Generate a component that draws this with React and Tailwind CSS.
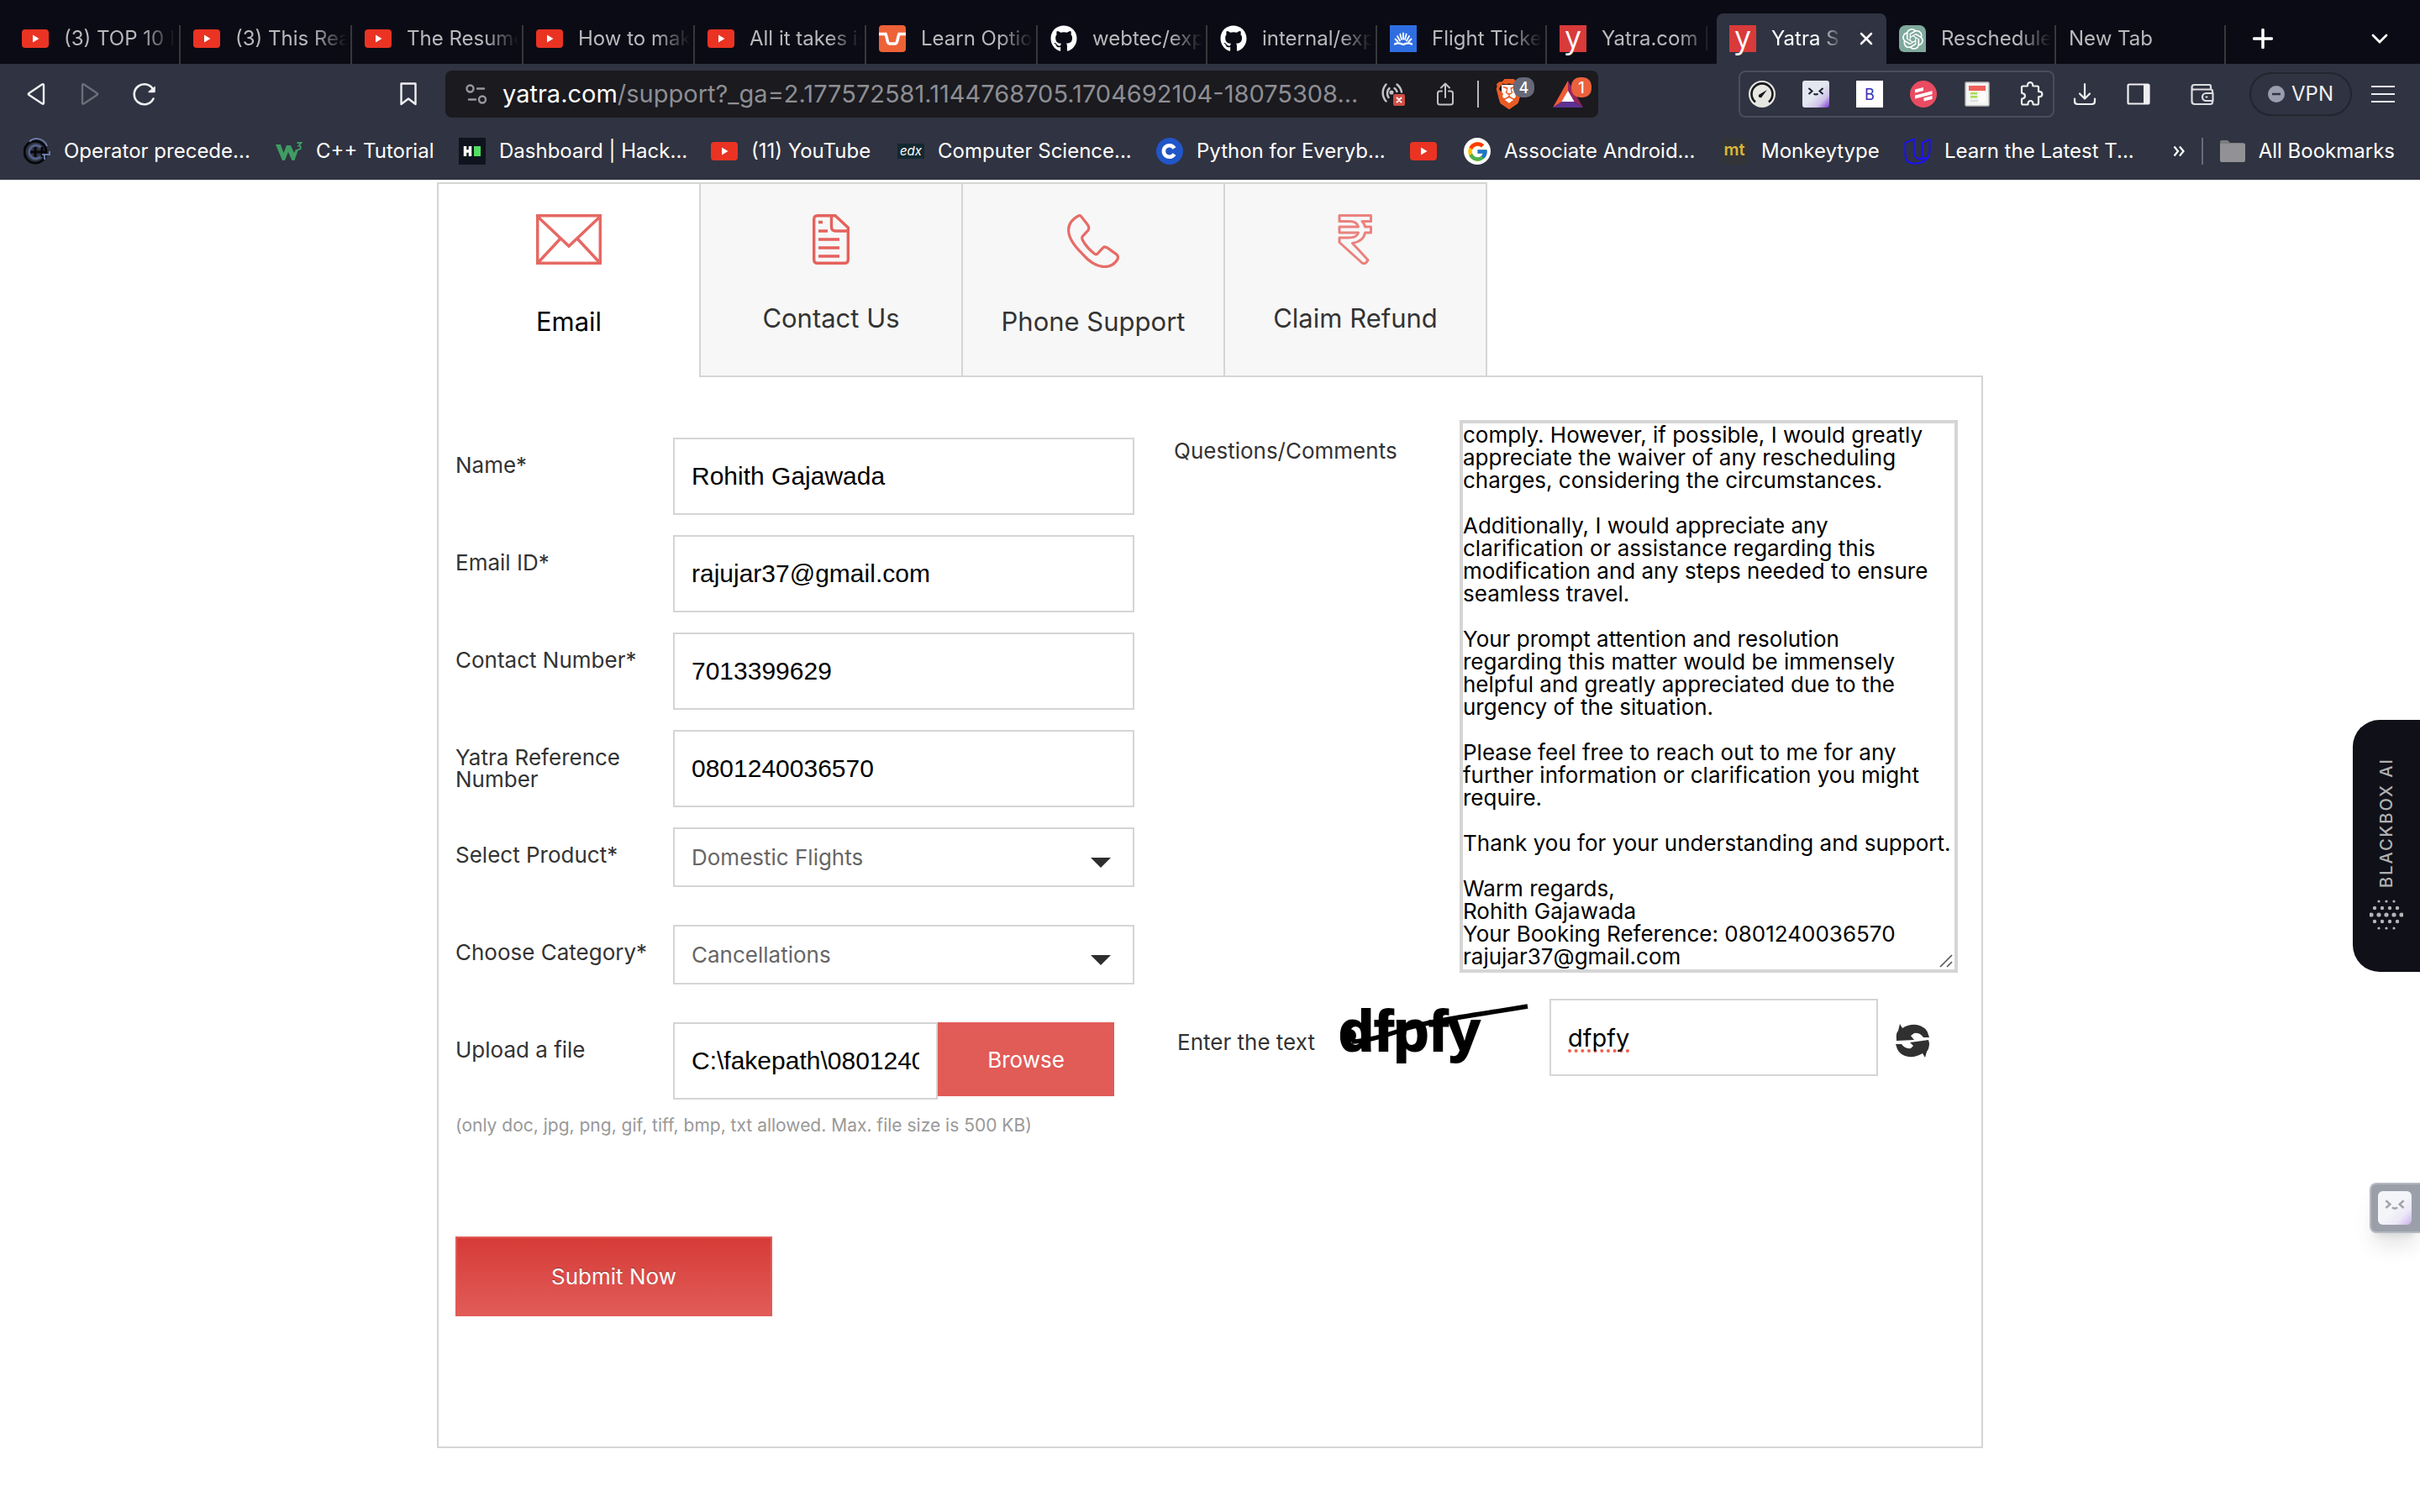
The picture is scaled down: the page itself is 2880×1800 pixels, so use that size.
import React from "react";
import { FaGithub } from "react-icons/fa";
import { FcGoogle } from "react-icons/fc";
import { SiBrave, SiOpenai } from "react-icons/si";

/* ---------- favicons ---------- */

const YouTube = () => (
  <svg viewBox="0 0 32 32" className="size-8">
    <rect x="0" y="5" width="32" height="22" rx="4" fill="#ea3323" />
    <path d="M13 11.5v9l7.500-4.500z" fill="#fff" />
  </svg>
);

const Unstop = () => (
  <svg viewBox="0 0 32 32" className="size-8">
    <rect width="32" height="32" rx="4" fill="#ee6237" />
    <path d="M0 10.500h8c2.500 6 1.500 11.500 4.500 11.500h7c3 0 2-5.500 4.500-11.500h8" fill="none" stroke="#fff" strokeWidth="3.500" />
  </svg>
);

const FlightIcon = () => (
  <svg viewBox="0 0 32 32" className="size-8">
    <rect width="32" height="32" fill="#2e6ee0" />
    <g stroke="#fff" strokeWidth="1.800" strokeLinecap="round" fill="none">
      <path d="M16 9.500v7M12.300 10.500l1.700 6.500M19.700 10.500L18 17M9 13l3 5.500M23 13l-3 5.500M6.500 16.500l3 3M25.500 16.500l-3 3" />
      <path d="M6 22.500c4-2.500 7-1 10 .5 3-1.500 6-3 10-.5" strokeWidth="2.200" />
    </g>
  </svg>
);

const YatraIcon = () => (
  <span className="flex size-8 items-center justify-center bg-[#d93a3a] pb-1 font-['Open_Sans',sans-serif] text-[36px] leading-8 text-white">y</span>
);

const ChatIcon = () => (
  <span className="flex size-8 items-center justify-center rounded-tl-lg rounded-tr-lg rounded-bl-md bg-[#7fa99c] text-white">
    <SiOpenai size={25} />
  </span>
);

const GithubIcon = () => <FaGithub size={32} className="text-white" />;

const CppIcon = () => (
  <svg viewBox="0 0 32 32" className="size-8">
    <circle cx="14" cy="17" r="13" fill="none" stroke="#07080c" strokeWidth="3" />
    <path d="M7 4.500A13 13 0 0 1 28 10" fill="none" stroke="#6a7ba6" strokeWidth="2" />
    <path d="M21 12a8 8 0 1 0 0 10" fill="none" stroke="#536189" strokeWidth="3" />
    <path d="M8 17h20M14 11v12M22 11v12" stroke="#07080c" strokeWidth="3" />
    <path d="M22 20h9v-4M25 20v6" stroke="#6a7ba6" strokeWidth="2" fill="none" />
  </svg>
);

const W3Icon = () => (
  <svg viewBox="0 0 32 32" className="size-8">
    <path d="M0 8h6l3.500 10L13 9h5l4 9 2-4 3 0-4.500 13h-3L15 17l-4 10H8z" fill="#3f9c63" />
    <path d="M25.500 6h5l-3 3.500c3.500 0 3.500 5-1.500 4.500" fill="none" stroke="#3f9c63" strokeWidth="1.800" />
  </svg>
);

const HackIcon = () => (
  <svg viewBox="0 0 32 32" className="size-8">
    <rect width="32" height="32" fill="#0e141e" />
    <path d="M7.500 10v12M13.500 10v12M7.500 16h6" stroke="#fff" strokeWidth="3.500" />
    <rect x="18" y="10" width="8" height="12" fill="#4fdf5f" />
  </svg>
);

const EdxIcon = () => (
  <span className="flex size-8 items-center justify-center">
    <span className="flex h-[18px] w-8 items-center justify-center bg-[#12292f] text-[15px] text-white italic">edx</span>
  </span>
);

const CourseraIcon = () => (
  <svg viewBox="0 0 32 32" className="size-8">
    <circle cx="16" cy="16" r="16" fill="#2156c9" />
    <path d="M21.500 12.500a6.800 6.800 0 1 0 0 7" fill="none" stroke="#fff" strokeWidth="4.500" />
  </svg>
);

const GoogleIcon = () => (
  <span className="flex size-8 items-center justify-center rounded-full bg-white">
    <FcGoogle size={27} />
  </span>
);

const MtIcon = () => (
  <span className="flex size-8 items-center justify-center rounded-md bg-[#323437] pb-1 text-[20px] leading-none font-semibold text-[#dcb63a]">mt</span>
);

const UdacityIcon = () => (
  <svg viewBox="0 0 34 34" className="size-8" fill="none" stroke="#1b12f5" strokeWidth="2.200" strokeLinejoin="round">
    <path d="M1.500 6.500L12.500 1.500V18q0 7 6.500 9M1.500 6.500V21q0 11.500 11.500 11.500" />
    <path d="M13 32.500C25 32.500 32.500 28 32.500 15V2L23 6.500V21q0 5.500-4 6 5 .5 9-2.500" />
  </svg>
);

/* ---------- extension icons ---------- */

const GaugeIcon = () => (
  <svg viewBox="0 0 32 32" className="size-8">
    <circle cx="16" cy="16" r="16" fill="#e6e7e2" />
    <path d="M8 25.500a12.500 12.500 0 1 1 16 0" fill="none" stroke="#17181a" strokeWidth="2.600" />
    <path d="M22 11l-8.500 5a2.200 2.200 0 1 0 2.500 3z" fill="#17181a" />
  </svg>
);

const FaceIcon = ({ id }) => (
  <svg viewBox="0 0 32 32" className="size-full">
    <defs>
      <linearGradient id={id} x1="0" y1="0" x2="1" y2="1">
        <stop offset="0.500" stopColor="#e3e7f0" />
        <stop offset="0.750" stopColor="#cfc3ea" />
        <stop offset="1" stopColor="#7a35c9" />
      </linearGradient>
    </defs>
    <rect width="32" height="32" rx="3" fill={`url(#${id})`} />
    <path d="M7.500 9l4 3.500-4 3.500M24.500 9l-4 3.500 4 3.500M13.500 15.500q2.500 2 5 0" fill="none" stroke="#191b2a" strokeWidth="2" />
  </svg>
);

const BIcon = () => (
  <span className="flex size-8 items-center justify-center bg-white text-[18px] text-[#3230b8]">B</span>
);

const RedCircleIcon = () => (
  <svg viewBox="0 0 32 32" className="size-8">
    <circle cx="16" cy="16" r="16" fill="#e94b62" />
    <path d="M6 10.500l10-2.500v4L6 14.500zM6 17.500l20.500-5.200v4L6 21.500zM16.500 20.500l10-2.500v4l-10 2.500z" fill="#fff" />
  </svg>
);

const NewsIcon = () => (
  <svg viewBox="0 0 32 32" className="size-8">
    <rect x="2" y="2" width="28" height="28" rx="1" fill="#f4f4f2" stroke="#b9b9b9" strokeWidth="1.500" />
    <rect x="6" y="6" width="20" height="6" fill="#ee5f59" />
    <rect x="8" y="14" width="8" height="2.500" fill="#a7dc53" />
    <rect x="8" y="18" width="8" height="2.500" fill="#a7dc53" />
    <rect x="18" y="14" width="8" height="12" fill="#fbfbfb" />
    <rect x="8" y="23" width="9" height="2" fill="#dedede" />
  </svg>
);

const PuzzleIcon = () => (
  <svg viewBox="0 0 32 32" className="size-8" fill="none" stroke="#efeff2" strokeWidth="2.200" strokeLinejoin="round">
    <path d="M5 8q0-1.500 1.500-1.500h5c.5 0 .8-.4.6-1-.8-4.500 6.800-4.500 6 0-.1.600.2 1 .7 1h4.700Q25 6.500 25 8v4.500c0 .6.400.8.900.7 4.600-.8 4.600 6.600 0 5.900-.5-.1-.9.200-.9.700v6.700q0 2-1.500 2h-4.300c-.6 0-.8-.4-.7-.9.300-4.800-6.400-4.800-6 0 .1.500-.2.900-.8.900H6.500Q5 28.500 5 26.500v-4.300c0-.6.300-.9.900-.9 4-.4 4-5.800 0-6.200-.6 0-.9-.3-.9-.9z" />
  </svg>
);

/* ---------- data ---------- */

const leftTabs = [
  { title: "(3) TOP 10 I", icon: YouTube, w: "w-[204px]" },
  { title: "(3) This Rea", icon: YouTube, w: "w-[204px]" },
  { title: "The Resume", icon: YouTube, w: "w-[204px]" },
  { title: "How to mak", icon: YouTube, w: "w-[204px]" },
  { title: "All it takes is", icon: YouTube, w: "w-[204px]" },
  { title: "Learn Optio", icon: Unstop, w: "w-[204px]" },
  { title: "webtec/exp", icon: GithubIcon, w: "w-[202px]" },
  { title: "internal/exp", icon: GithubIcon, w: "w-[202px]" },
  { title: "Flight Ticke", icon: FlightIcon, w: "w-[202px]" },
  { title: "Yatra.com |", icon: YatraIcon, w: "w-[202px]", noLine: true },
];

const bookmarks = [
  { label: "Operator precede...", icon: CppIcon, w: "w-[300px]" },
  { label: "C++ Tutorial", icon: W3Icon, w: "w-[218px]" },
  { label: "Dashboard | Hack...", icon: HackIcon, w: "w-[300px]" },
  { label: "(11) YouTube", icon: YouTube, w: "w-[222px]" },
  { label: "Computer Science...", icon: EdxIcon, w: "w-[308px]" },
  { label: "Python for Everyb...", icon: CourseraIcon, w: "w-[302px]" },
  { label: "", icon: YouTube, w: "w-[64px]" },
  { label: "Associate Android...", icon: GoogleIcon, w: "w-[306px]" },
  { label: "Monkeytype", icon: MtIcon, w: "w-[218px]" },
  { label: "Learn the Latest T...", icon: UdacityIcon, w: "w-[320px]" },
];

const message = `comply. However, if possible, I would greatly
appreciate the waiver of any rescheduling
charges, considering the circumstances.

Additionally, I would appreciate any
clarification or assistance regarding this
modification and any steps needed to ensure
seamless travel.

Your prompt attention and resolution
regarding this matter would be immensely
helpful and greatly appreciated due to the
urgency of the situation.

Please feel free to reach out to me for any
further information or clarification you might
require.

Thank you for your understanding and support.

Warm regards,
Rohith Gajawada
Your Booking Reference: 0801240036570
rajujar37@gmail.com`;

/* ---------- browser chrome ---------- */

function BrowserTab({ title, icon: Icon, w, noLine }) {
  return (
    <button type="button" className={`${w} flex h-full shrink-0 items-center pt-4 pl-[15px] text-left`}>
      {Icon && <span className="mr-[18px] shrink-0"><Icon /></span>}
      <span className="flex-1 overflow-hidden text-[24px] leading-8 whitespace-nowrap text-[#b9b9bd] [mask-image:linear-gradient(to_right,#000_70%,transparent)]">
        {title}
      </span>
      <span className={noLine ? "ml-1 w-0.5" : "ml-1 h-[46px] w-0.5 self-end bg-[#38373b]"} />
    </button>
  );
}

function TabStrip() {
  return (
    <div className="flex h-[76px] items-stretch bg-[#0b0b15] pl-[11px]">
      {leftTabs.map((t) => (
        <BrowserTab key={t.title} {...t} />
      ))}
      <div className="mt-4 flex w-[202px] shrink-0 items-center rounded-t-lg bg-[#303341] pl-[15px]">
        <YatraIcon />
        <span className="ml-[18px] flex-1 overflow-hidden text-[24px] leading-8 whitespace-nowrap text-white [mask-image:linear-gradient(to_right,#000_65%,transparent)]">Yatra S</span>
        <button type="button" aria-label="Close tab" className="mr-4 ml-5">
          <svg viewBox="0 0 16 16" className="size-4" stroke="#fff" strokeWidth="2.500" strokeLinecap="round">
            <path d="M2 2l12 12M14 2L2 14" />
          </svg>
        </button>
      </div>
      <BrowserTab title="Reschedule" icon={ChatIcon} w="w-[202px]" />
      <BrowserTab title="New Tab" w="w-[202px]" />
      <button type="button" aria-label="New tab" className="mt-4 ml-8">
        <svg viewBox="0 0 24 24" className="size-6" stroke="#fff" strokeWidth="3.500" strokeLinecap="round">
          <path d="M12 1.500v21M1.500 12h21" />
        </svg>
      </button>
      <button type="button" aria-label="Search tabs" className="mt-4 mr-[38px] ml-auto">
        <svg viewBox="0 0 20 12" className="h-3 w-5" fill="none" stroke="#fff" strokeWidth="2.800" strokeLinecap="round">
          <path d="M2 2l8 8 8-8" />
        </svg>
      </button>
    </div>
  );
}

function Toolbar() {
  return (
    <div className="flex h-[72px] items-center bg-[#303341] pr-[30px] text-[#efeff2]">
      <div className="flex w-[530px] items-center pl-8">
        <button type="button" aria-label="Back">
          <svg viewBox="0 0 22 28" className="h-7 w-[22px]" fill="none" stroke="currentColor" strokeWidth="2.400" strokeLinejoin="round">
            <path d="M20 3.500v21q0 2-2 .8L2.500 15q-1.500-1 0-2L18 2.500q2-1 2 1z" />
          </svg>
        </button>
        <button type="button" aria-label="Forward" className="ml-[42px] text-[#6c6e7a]">
          <svg viewBox="0 0 22 28" className="h-7 w-[22px]" fill="none" stroke="currentColor" strokeWidth="2.400" strokeLinejoin="round">
            <path d="M2 3.500v21q0 2 2 .8L19.500 15q1.500-1 0-2L4 2.500q-2-1-2 1z" />
          </svg>
        </button>
        <button type="button" aria-label="Reload" className="ml-10">
          <svg viewBox="0 0 28 28" className="size-7" fill="none">
            <path d="M24.500 19.500a12 12 0 1 1 0-10.500" stroke="currentColor" strokeWidth="2.600" strokeLinecap="round" />
            <path d="M26.800 4.500v6.200q0 1.500-1.500 1.500h-6q-1.500-.3-.6-1.500z" fill="currentColor" />
          </svg>
        </button>
        <button type="button" aria-label="Bookmark this page" className="mr-[34px] ml-auto">
          <svg viewBox="0 0 20 28" className="h-7 w-5" fill="none" stroke="currentColor" strokeWidth="2.400" strokeLinejoin="round">
            <path d="M1.500 1.500h17v24.500L10 19.500 1.500 26z" />
          </svg>
        </button>
      </div>

      <div className="flex h-14 min-w-0 flex-1 items-center rounded-lg bg-[#1a1a1f] pr-2 pl-6">
        <svg viewBox="0 0 26 24" className="h-6 w-[26px] shrink-0" fill="none" stroke="#97989e" strokeWidth="2.400" strokeLinecap="round">
          <circle cx="5.500" cy="5.500" r="4" />
          <path d="M14 5.500h8M4 18.500h8" />
          <circle cx="20" cy="18.500" r="4" />
        </svg>
        <span className="ml-[18px] text-[29px] leading-9 whitespace-nowrap text-[#8e8e93]">
          <span className="text-white">yatra.com</span>/support?_ga=2.177572581.1144768705.1704692104-18075308...
        </span>
        <svg viewBox="0 0 30 28" className="ml-auto h-7 w-[30px] shrink-0" fill="none" stroke="#c3c3c6" strokeWidth="2.500" strokeLinecap="round">
          <path d="M7.500 2.500a15 15 0 0 0 0 20M11.500 7a8.500 8.500 0 0 0-1 11M20.500 2.500a15 15 0 0 1 5.500 9M17.500 7a8.500 8.500 0 0 1 3 4" />
          <circle cx="14" cy="12" r="1.300" fill="#c3c3c6" />
          <rect x="16" y="14" width="14" height="14" rx="2" fill="#ce4f44" stroke="none" />
          <path d="M20.500 18.500l5 5M25.500 18.500l-5 5" stroke="#fff" strokeWidth="1.800" />
        </svg>
        <svg viewBox="0 0 20 28" className="ml-[38px] h-7 w-5 shrink-0" fill="none" stroke="#c3c3c6" strokeWidth="2" strokeLinecap="round" strokeLinejoin="round">
          <path d="M6 10.500H3.500Q1 10.500 1 13v11q0 2.500 2.500 2.500h13Q19 26.500 19 24V13q0-2.500-2.500-2.500H14M10 18V2M5 6.500L10 1.500l5 5" />
        </svg>
        <span className="ml-7 h-8 w-0.5 shrink-0 bg-[#b9b9bd]" />
        <span className="relative ml-[22px] h-9 w-11 shrink-0">
          <svg viewBox="0 0 30 36" className="h-9 w-[30px]"><path d="M5 7h20v17l-10 8-10-8z" fill="#fff" /></svg>
          <SiBrave size={36} className="absolute top-0 -left-1 text-[#ea5b24]" />
          <span className="absolute -top-0.5 right-0 flex h-6 w-[25px] items-center justify-center rounded-[10px] bg-[#676978] text-[18px] font-medium text-white">4</span>
        </span>
        <span className="relative ml-[22px] h-8 w-[46px] shrink-0">
          <svg viewBox="0 0 36 32" className="h-8 w-9">
            <path d="M18 0L0 32l11-7 7-12z" fill="#ee5b36" />
            <path d="M18 0l18 32-11-7-7-12z" fill="#95255f" />
            <path d="M0 32l11-7h14l11 7z" fill="#5d3192" />
            <path d="M18 12l7.500 13h-15z" fill="#fff" />
          </svg>
          <span className="absolute -top-1 right-0 flex size-6 items-center justify-center rounded-[10px] bg-[#ea613c] text-[18px] font-medium text-white">1</span>
        </span>
      </div>

      <div className="ml-[167px] flex h-14 items-center gap-8 rounded-lg border-2 border-[#4a4d5b] px-2.5">
        <GaugeIcon />
        <span className="size-8"><FaceIcon id="face-toolbar" /></span>
        <BIcon />
        <RedCircleIcon />
        <NewsIcon />
        <PuzzleIcon />
      </div>
      <button type="button" aria-label="Downloads" className="ml-[22px]">
        <svg viewBox="0 0 28 28" className="size-7" fill="none" stroke="currentColor" strokeWidth="2.200" strokeLinecap="round" strokeLinejoin="round">
          <path d="M14 2v17M8 13.500l6 6 6-6M2 19.500v3Q2 26 5.500 26h17q3.500 0 3.500-3.500v-3" />
        </svg>
      </button>
      <button type="button" aria-label="Sidebar" className="ml-9">
        <svg viewBox="0 0 28 28" className="size-7" fill="none">
          <rect x="1.500" y="2.500" width="25" height="23" rx="1.500" stroke="currentColor" strokeWidth="2.200" />
          <path d="M20 2h7v24h-7z" fill="currentColor" />
        </svg>
      </button>
      <button type="button" aria-label="Wallet" className="ml-12">
        <svg viewBox="0 0 28 28" className="size-7" fill="none" stroke="#dcdce0" strokeWidth="2.200" strokeLinejoin="round">
          <path d="M24 8V4.500Q24 3 22.500 3h-18Q1.500 3 1.500 6T4.500 8.500H24q2 0 2 2v3M1.500 6v16.500Q1.500 26 5 26h18.500q2.500 0 2.500-2.500V22" />
          <path d="M26.500 13h-8a4.500 4.500 0 0 0 0 9h8z" />
          <path d="M18.500 17.500h1" strokeLinecap="round" />
        </svg>
      </button>
      <button type="button" className="ml-[42px] flex h-[52px] w-[122px] items-center gap-2 rounded-full border-2 border-[#23252f] pl-5 text-[24px]">
        <svg viewBox="0 0 20 20" className="size-5">
          <circle cx="10" cy="10" r="10" fill="#9b9cae" />
          <path d="M5 10h10" stroke="#303341" strokeWidth="2.500" />
        </svg>
        VPN
      </button>
      <button type="button" aria-label="Menu" className="ml-[23px]">
        <svg viewBox="0 0 28 22" className="h-[22px] w-7" stroke="currentColor" strokeWidth="2.200">
          <path d="M0 2h28M0 11h28M0 20h28" />
        </svg>
      </button>
    </div>
  );
}

function BookmarksBar() {
  return (
    <nav className="flex h-[66px] items-center bg-[#303341] pr-[30px] pb-0.5 pl-7 text-[24px] text-white">
      {bookmarks.map(({ label, icon: Icon, w }, i) => (
        <a key={i} href="#" aria-label={label || "YouTube"} className={`${w} flex shrink-0 items-center gap-4 whitespace-nowrap`}>
          <span className="shrink-0"><Icon /></span>
          {label}
        </a>
      ))}
      <button type="button" aria-label="More bookmarks">
        <svg viewBox="0 0 14 14" className="size-3.5" fill="none" stroke="#fff" strokeWidth="2.200">
          <path d="M1.500 1.500L6 7l-4.500 5.500M8 1.500L12.500 7 8 12.500" />
        </svg>
      </button>
      <span className="ml-auto h-8 w-0.5 bg-[#696b76]" />
      <a href="#" className="ml-5 flex items-center gap-4">
        <svg viewBox="0 0 30 26" className="h-[26px] w-[30px]">
          <path d="M0 3q0-3 2-3h7l3 3h15q3 0 3 3v3H0z" fill="#7d7d80" />
          <rect y="4" width="30" height="22" rx="2" fill="#929296" />
        </svg>
        All Bookmarks
      </a>
    </nav>
  );
}

/* ---------- page ---------- */

const MailIcon = () => (
  <svg viewBox="0 0 78 60" className="h-[60px] w-[78px]" fill="none" stroke="#e66863" strokeWidth="3.500">
    <path d="M1.700 1.700h74.600v56.600H1.700zM2 3l37 35L76 3M2 58l27-29M76 58L49 29" />
  </svg>
);

const DocIcon = () => (
  <svg viewBox="0 0 44 60" className="h-[60px] w-11" fill="none" stroke="#e5625d" strokeWidth="3.400">
    <path d="M6 1.700h21L42.300 16v38q0 4.300-4.300 4.300H6q-4.300 0-4.300-4.300V6Q1.700 1.700 6 1.700z" />
    <path d="M22.500 2v13q0 5 5 5h15M7 9.500h5M7 20h11M7 30h25M7 40h25M7 50h25" />
  </svg>
);

const PhoneIcon = () => (
  <svg viewBox="0 0 62 64" className="h-16 w-[62px]" fill="none" stroke="#e66c67" strokeWidth="3.200" strokeLinejoin="round">
    <path d="M14 1.600q1.500-.5 3 1.500l7 9q3 4 1 7l-6.500 7q-1.500 2 0 5 5 9 14 16 2.500 1.500 4-.5l5.500-6q2.500-3 6-.5l10.500 7.500q3 2.500 1.500 6-5 9-16 9-13-.5-26-15.500Q1.600 31 1.600 19 1.600 8 14 1.600z" />
  </svg>
);

const RupeeIcon = () => (
  <svg viewBox="0 0 42 60" className="h-[60px] w-[42px]" fill="none" stroke="#ea827e" strokeWidth="3" strokeLinejoin="round">
    <path d="M2 1.600h37.500v7H29q3 2.500 3.500 6.500h7v7h-7Q31 32 17.500 34.500L36 54.500q-3 6-7 3.500L2 33.500V28h11q10 0 11.500-6H2v-7h22.500Q23 8.600 14 8.600H2z" />
  </svg>
);

const supportTabs = [
  { label: "Email", icon: MailIcon, box: "h-16", cls: "w-[312px] -mb-0.5 bg-white text-black" },
  { label: "Contact Us", icon: DocIcon, box: "h-[60px]", cls: "w-[312px] bg-[#f7f7f7] text-[#333]" },
  { label: "Phone Support", icon: PhoneIcon, box: "h-16", cls: "w-[312px] bg-[#f7f7f7] text-[#333]" },
  { label: "Claim Refund", icon: RupeeIcon, box: "h-[60px]", cls: "w-[314px] border-r-2 bg-[#f7f7f7] text-[#333]" },
];

const fieldBox = "border-2 border-[#d5d5d5] bg-white px-5 text-black outline-none";

function Field({ id, label, children }) {
  return (
    <div className="flex items-start">
      <label htmlFor={id} className="w-[259px] shrink-0 pt-5 pr-4 text-[26px] leading-[26px] text-[#333]">{label}</label>
      {children}
    </div>
  );
}

function TextField({ id, label, value }) {
  return (
    <Field id={id} label={label}>
      <input id={id} type="text" defaultValue={value} className={`${fieldBox} h-[92px] w-[549px] font-['Liberation_Sans',sans-serif] text-[30px]`} />
    </Field>
  );
}

function SelectField({ id, label, value }) {
  return (
    <Field id={id} label={label}>
      <div className="relative w-[549px]">
        <select id={id} defaultValue={value} className="h-[71px] w-full appearance-none border-2 border-[#d5d5d5] bg-white px-5 text-[26px] text-[#666] outline-none">
          <option>{value}</option>
        </select>
        <svg viewBox="0 0 24 12" className="pointer-events-none absolute top-9 right-7 h-3 w-6" fill="#2e2e2e">
          <path d="M0 0h24L12 12z" />
        </svg>
      </div>
    </Field>
  );
}

function SupportForm() {
  return (
    <form className="flex items-start border-2 border-[#d5d5d5] pb-[155px]" onSubmit={(e) => e.preventDefault()}>
      <div className="shrink-0 pt-[72px] pl-5">
        <div className="grid auto-rows-[116px]">
          <TextField id="name" label="Name*" value="Rohith Gajawada" />
          <TextField id="email" label="Email ID*" value="rajujar37@gmail.com" />
          <TextField id="phone" label="Contact Number*" value="7013399629" />
          <TextField id="reference" label="Yatra Reference Number" value="0801240036570" />
          <SelectField id="product" label="Select Product*" value="Domestic Flights" />
          <SelectField id="category" label="Choose Category*" value="Cancellations" />
        </div>
        <Field id="file" label="Upload a file">
          <input id="file" type="text" defaultValue="C:\fakepath\0801240036570.pdf" className={`${fieldBox} h-[92px] w-[315px] font-['Liberation_Sans',sans-serif] text-[30px]`} />
          <button type="button" className="h-[88px] w-[210px] bg-[#e15b57] text-[26px] text-white">Browse</button>
        </Field>
        <p className="mt-[18px] text-[21px] leading-[26px] text-[#999]">(only doc, jpg, png, gif, tiff, bmp, txt allowed. Max. file size is 500 KB)</p>
        <button type="submit" className="mt-[119px] h-[95px] w-[377px] border-2 border-[#e15b57] bg-linear-to-b from-[#d63a37] to-[#e15b57] text-[26px] text-white [text-shadow:0_-1px_0_rgba(0,0,0,0.4)]">
          Submit Now
        </button>
      </div>

      <div className="ml-[47px] pt-[51px]">
        <div className="flex items-start">
          <label htmlFor="comments" className="w-[340px] pt-6 text-[26px] leading-[26px] text-[#333]">Questions/Comments</label>
          <div className="relative">
            <textarea
              id="comments"
              defaultValue={message}
              className="block h-[658px] w-[593px] resize-none overflow-hidden border-4 border-[#d5d5d5] text-[26px] leading-[27px] whitespace-pre text-black outline-none"
            />
            <svg viewBox="0 0 16 16" className="pointer-events-none absolute right-1.5 bottom-1.5 size-4" stroke="#555" strokeWidth="1.600">
              <path d="M1 15L15 1M9 15l6-6" />
            </svg>
          </div>
        </div>
        <div className="mt-[31px] flex items-start">
          <label htmlFor="captcha" className="w-[198px] pt-[39px] pl-1 text-[26px] leading-[26px] text-[#333]">Enter the text</label>
          <svg viewBox="0 0 230 92" className="h-[92px] w-[230px]">
            <text x="-2" y="62" fontSize="69" fontWeight="700" fontFamily="Liberation Sans, sans-serif" stroke="#000" strokeWidth="2">dfpfy</text>
            <path d="M14 51c14 0 40-7 66-16s90-17 143-26" fill="none" stroke="#000" strokeWidth="5.500" />
            <circle cx="11" cy="44" r="8" />
          </svg>
          <input
            id="captcha"
            type="text"
            defaultValue="dfpfy"
            className="ml-[19px] h-[92px] w-[391px] border-2 border-[#d5d5d5] px-5 text-[29px] text-black underline decoration-[#f0604e] decoration-dotted decoration-4 underline-offset-4 outline-none [text-decoration-skip-ink:none]"
          />
          <button type="button" aria-label="Refresh image" className="mt-[30px] ml-[21px]">
            <svg viewBox="0 0 40 40" className="size-10" fill="#303030">
              <path d="M5 0l3 5q8-5 17-4 10 2 13 9l2 6h-7q-4-6-11-5l-4 3 4 5-21 1 0-2Q0 11 3 8z" />
              <path d="M35 40l-3-5q-8 5-17 4Q5 37 2 30l-2-6h7q4 6 11 5l3-3-4-4 22-3 1 4q0 6-3 10z" />
            </svg>
          </button>
        </div>
      </div>
    </form>
  );
}

const dotRows = [
  { y: 4, xs: [11, 20, 29], r: 1.6 },
  { y: 12, xs: [6, 15, 24, 33], r: 2.2 },
  { y: 20, xs: [2, 11, 20, 29, 38], r: 2.6 },
  { y: 28, xs: [6, 15, 24, 33], r: 2.2 },
  { y: 36, xs: [11, 20, 29], r: 1.6 },
];

export default function App() {
  return (
    <div className="min-h-screen bg-white font-['Inter',sans-serif]">
      <header>
        <TabStrip />
        <Toolbar />
        <BookmarksBar />
      </header>

      <main className="mx-auto max-w-[1840px] pt-[3px]">
        <div className="flex h-[230px] items-stretch">
          {supportTabs.map(({ label, icon: Icon, box, cls }) => (
            <button key={label} type="button" className={`${cls} relative flex flex-col items-center border-t-2 border-l-2 border-[#d5d5d5] pt-9 text-[31px] leading-10`}>
              <span className={`${box} mb-11`}><Icon /></span>
              {label}
            </button>
          ))}
        </div>
        <SupportForm />
      </main>

      <aside className="fixed top-[857px] right-0 flex h-[300px] w-20 flex-col items-center rounded-l-[32px] bg-[#101018] pt-[45px]">
        <span className="rotate-180 text-[20px] leading-6 font-medium tracking-widest whitespace-nowrap text-[#b0b0b2] [writing-mode:vertical-rl]">BLACKBOX AI</span>
        <svg viewBox="0 0 40 40" className="mt-3 size-10" fill="#b5b5b7">
          {dotRows.map((row) => row.xs.map((x) => <circle key={`${row.y}-${x}`} cx={x} cy={row.y} r={row.r} />))}
        </svg>
      </aside>

      <button type="button" aria-label="Assistant" className="fixed top-[1408px] right-0 flex h-[60px] w-[60px] items-center rounded-l-lg border-y-2 border-l-2 border-[#b5b9c2] bg-[#9b9fa9] pl-2 shadow-xl">
        <span className="size-10 overflow-hidden rounded-md bg-white">
          <span className="block size-10 opacity-40"><FaceIcon id="face-float" /></span>
        </span>
      </button>
    </div>
  );
}
